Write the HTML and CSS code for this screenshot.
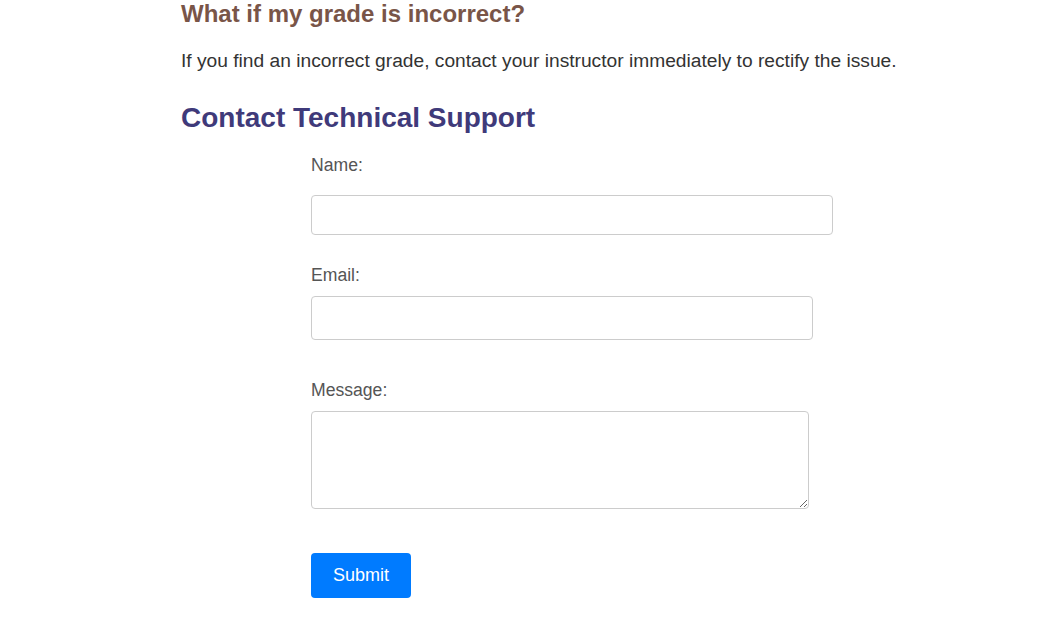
FILE: index.html
```html
<!DOCTYPE html>
<html>
<head>
<meta charset="utf-8">
<link rel="stylesheet" href="styles.css">
</head>
<body>
<main class="content">
  <h3 class="faq-q">What if my grade is incorrect?</h3>
  <p class="faq-a">If you find an incorrect grade, contact your instructor immediately to rectify the issue.</p>
  <h2 class="section-title">Contact Technical Support</h2>
  <form class="support-form">
    <label class="field-label" for="name">Name:</label>
    <input class="field name-field" id="name" type="text">
    <label class="field-label" for="email">Email:</label>
    <input class="field email-field" id="email" type="email">
    <label class="field-label" for="message">Message:</label>
    <textarea class="field message-field" id="message"></textarea>
    <button class="submit-btn" type="submit">Submit</button>
  </form>
</main>
</body>
</html>
```
FILE: styles.css
```css
html, body {
  margin: 0;
  padding: 0;
  background: #fff;
}
body {
  font-family: "Liberation Sans", Arial, sans-serif;
  color: #333;
}
.content {
  padding: 0 0 0 181px;
}
.faq-q {
  margin: 0;
  font-size: 24px;
  line-height: 28px;
  font-weight: bold;
  color: #795548;
}
.faq-a {
  margin: 21px 0 0;
  font-size: 19.2px;
  line-height: 24px;
  color: #333;
}
.section-title {
  margin: 28px 0 0;
  font-size: 28px;
  line-height: 34px;
  color: #3f3a7a;
}
.support-form {
  display: flex;
  flex-direction: column;
  align-items: flex-start;
  margin-left: 130px;
  padding-top: 19px;
}
.field-label {
  font-size: 17.6px;
  line-height: 22px;
  color: #555;
}
.field {
  box-sizing: border-box;
  border: 1px solid #ccc;
  border-radius: 4px;
  background: #fff;
  font-family: inherit;
  font-size: 16px;
}
.name-field {
  width: 522px;
  height: 40px;
  margin: 19px 0 29px;
}
.email-field {
  width: 502px;
  height: 44px;
  margin: 10px 0 39px;
}
.message-field {
  width: 498px;
  height: 98px;
  margin: 10px 0 44px;
}
.submit-btn {
  width: 100px;
  height: 45px;
  border: none;
  border-radius: 4px;
  background: #007bff;
  color: #fff;
  font-family: inherit;
  font-size: 18px;
}
```
